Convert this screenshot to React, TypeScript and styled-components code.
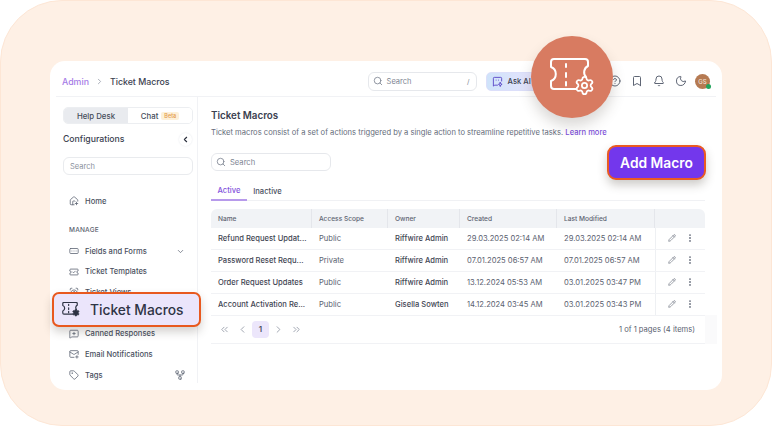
import React from "react";
import styled, { createGlobalStyle } from "styled-components";
import {
  Bell,
  Bookmark,
  ChevronDown,
  ChevronLeft,
  ChevronRight,
  ChevronsLeft,
  ChevronsRight,
  CircleHelp,
  EllipsisVertical,
  FormInput,
  HousePlus,
  MailPlus,
  MessageSquarePlus,
  Moon,
  Network,
  Pencil,
  ScanEye,
  Search,
  Settings,
  Tag,
  TicketCheck,
} from "lucide-react";

const GlobalStyle = createGlobalStyle`
  html, body {
    margin: 0;
    background: #fff;
    font-family: Inter, "Liberation Sans", sans-serif;
    color: #3b4150;
  }
  * { box-sizing: border-box; }
`;

const Frame = styled.div`
  width: 772px;
  height: 426px;
  padding: 61px 50px 36px;
  background: #fef0e5;
  border: 1px solid #fde6d5;
  border-radius: 62px;
  overflow: hidden;
`;

const Card = styled.div`
  position: relative;
  display: flex;
  flex-direction: column;
  height: 329px;
  margin: -1px;
  background: #fff;
  border-radius: 15px;
`;

const TopBar = styled.header`
  display: flex;
  align-items: center;
  height: 36px;
  margin: 0 6px;
  padding: 5px 6px 0;
  border-bottom: 1px solid #f1f2f5;
  flex: none;
`;

const Crumb = styled.span`
  font-size: 8.8px;
  font-weight: 500;
  color: #a57be6;
`;

const CrumbCurrent = styled.span`
  font-size: 8.8px;
  font-weight: 500;
  color: #3b4150;
`;

const CrumbSep = styled.span`
  display: flex;
  margin: 0 6px 0 6px;
  color: #9298a5;
`;

const TopSearch = styled.div`
  display: flex;
  align-items: center;
  gap: 4px;
  width: 109px;
  height: 19px;
  margin-left: 198px;
  padding: 0 6px 0 4px;
  border: 1px solid #e6e8ec;
  border-radius: 6px;
  font-size: 7.5px;
  color: #7d8492;
`;

const Slash = styled.span`
  margin-left: auto;
  font-size: 7px;
`;

const AskAi = styled.div`
  display: flex;
  align-items: center;
  gap: 5px;
  width: 62px;
  height: 19px;
  margin-left: 9px;
  padding-left: 5px;
  border-radius: 5px;
  border: 1px solid #dcdffa;
  background: linear-gradient(90deg, #cfe3fa, #ece4fd);
  font-size: 7.6px;
  font-weight: 500;
  color: #3b4150;
`;

const TopIcons = styled.div`
  display: flex;
  align-items: center;
  margin-left: auto;
  gap: 10px;
  color: #5f6675;
`;

const Avatar = styled.div`
  position: relative;
  display: flex;
  align-items: center;
  justify-content: center;
  width: 15px;
  height: 15px;
  margin-left: -2px;
  border-radius: 50%;
  background: #b57a52;
  color: #f3e2d6;
  font-size: 6px;
  font-weight: 500;
`;

const OnlineDot = styled.span`
  position: absolute;
  right: -1px;
  bottom: 0;
  width: 5px;
  height: 5px;
  border-radius: 50%;
  background: #22a45d;
`;

const Body = styled.div`
  display: flex;
  flex: 1;
  min-height: 0;
`;

const Sidebar = styled.aside`
  width: 148px;
  height: 286px;
  padding: 10px 4px 0 13px;
  border-right: 1px solid #f1f2f5;
  flex: none;
`;

const Tabs = styled.div`
  display: flex;
  width: 130px;
  height: 17px;
  border: 1px solid #eceef1;
  border-radius: 5px;
  overflow: hidden;
  font-size: 7.8px;
  font-weight: 500;
`;

const TabButton = styled.div<{ $active?: boolean }>`
  display: flex;
  align-items: center;
  justify-content: center;
  gap: 3px;
  width: 65px;
  background: ${({ $active }) => ($active ? "#e9ebef" : "#fff")};
  color: #454b59;
`;

const BetaBadge = styled.span`
  padding: 1px 3px;
  border-radius: 2px;
  background: #fdf0d8;
  color: #e39a4a;
  font-size: 5.5px;
`;

const ConfigRow = styled.div`
  display: flex;
  align-items: center;
  justify-content: space-between;
  height: 16px;
  margin-top: 7px;
  font-size: 8.7px;
  font-weight: 500;
  color: #3b4150;
`;

const CollapseButton = styled.span`
  display: flex;
  align-items: center;
  justify-content: center;
  width: 13px;
  height: 13px;
  margin-right: 1px;
  border-radius: 50%;
  box-shadow: 0 0 2px #e3e5ea;
  color: #2e3340;
`;

const SideSearch = styled.div`
  display: flex;
  align-items: center;
  width: 130px;
  height: 18px;
  margin-top: 10px;
  padding-left: 6px;
  border: 1px solid #e9ebee;
  border-radius: 6px;
  font-size: 7.5px;
  color: #8a909c;
`;

const NavRow = styled.div<{ $gapTop?: number }>`
  display: flex;
  align-items: center;
  gap: 6px;
  height: 20.7px;
  margin-top: ${({ $gapTop }) => $gapTop ?? 0}px;
  padding-left: 6px;
  font-size: 7.6px;
  font-weight: 500;
  color: #4a505e;
  svg { flex: none; color: #646b79; }
`;

const NavTrail = styled.span<{ $flip?: boolean }>`
  display: flex;
  margin-left: auto;
  margin-right: 8px;
  transform: ${({ $flip }) => ($flip ? "rotate(180deg)" : "none")};
`;

const NavSection = styled.div`
  margin: 14px 0 7px 6px;
  font-size: 6.5px;
  font-weight: 500;
  letter-spacing: 0.2px;
  color: #5c6270;
`;

const Main = styled.main`
  flex: 1;
  min-width: 0;
  padding: 12px 17px 0 13px;
`;

const Title = styled.h1`
  margin: 0;
  font-size: 9.8px;
  line-height: 14px;
  font-weight: 600;
  color: #3b4150;
`;

const Description = styled.p`
  margin: 4px 0 0;
  font-size: 7.6px;
  line-height: 12px;
  color: #656c7a;
`;

const LearnMore = styled.span`
  font-weight: 500;
  color: #7c4fd8;
`;

const MainSearch = styled.div`
  display: flex;
  align-items: center;
  gap: 4px;
  width: 120px;
  height: 18px;
  margin-top: 14px;
  padding-left: 4px;
  border: 1px solid #e6e8ec;
  border-radius: 6px;
  font-size: 7.6px;
  color: #7d8492;
`;

const ViewTabs = styled.div`
  display: flex;
  height: 20px;
  margin-top: 10px;
  border-bottom: 1px solid #f0f1f4;
  font-size: 7.6px;
  font-weight: 500;
`;

const ViewTab = styled.div<{ $active?: boolean }>`
  display: flex;
  align-items: center;
  justify-content: center;
  width: ${({ $active }) => ($active ? "36px" : "41px")};
  height: 20px;
  color: ${({ $active }) => ($active ? "#8454dc" : "#4a505e")};
  border-bottom: ${({ $active }) => ($active ? "2px solid #b79aeb" : "none")};
`;

const TableWrap = styled.div`
  width: 494px;
  margin-top: 8px;
  border-radius: 6px 6px 0 0;
`;

const COLUMNS = "101px 76px 72px 97px 98px 50px";

const HeadRow = styled.div`
  display: grid;
  grid-template-columns: ${COLUMNS};
  height: 19px;
  background: #f1f3f6;
  border-radius: 6px 6px 0 0;
`;

const HeadCell = styled.div`
  display: flex;
  align-items: center;
  padding-left: 7px;
  border-right: 1px solid #e4e6eb;
  font-size: 6.6px;
  font-weight: 500;
  color: #5e6472;
  &:last-child { border-right: none; }
`;

const DataRow = styled.div`
  display: grid;
  grid-template-columns: ${COLUMNS};
  height: 21.9px;
  border-bottom: 1px solid #f1f2f5;
`;

const Cell = styled.div<{ $tone?: "strong" | "muted" }>`
  display: flex;
  align-items: center;
  padding-left: 7px;
  white-space: nowrap;
  overflow: hidden;
  font-size: 7.6px;
  font-weight: ${({ $tone }) => ($tone === "strong" ? 500 : 400)};
  color: ${({ $tone }) => ($tone === "strong" ? "#3f4553" : "#5b6270")};
`;

const ActionCell = styled.div`
  display: flex;
  align-items: center;
  gap: 9px;
  padding-left: 12px;
  border-left: 1px solid #eef0f3;
  color: #6c7280;
`;

const Pager = styled.div`
  display: flex;
  align-items: center;
  width: 494px;
  height: 28px;
  padding: 0 10px 0 5px;
  border-bottom: 1px solid #f1f2f5;
  color: #9aa0ac;
`;

const PageButton = styled.span<{ $current?: boolean }>`
  display: flex;
  align-items: center;
  justify-content: center;
  width: 17px;
  height: 17px;
  margin-right: 1px;
  border-radius: 4px;
  background: ${({ $current }) => ($current ? "#ece6fb" : "transparent")};
  color: ${({ $current }) => ($current ? "#4a505e" : "#9aa0ac")};
  font-size: 8px;
  font-weight: 600;
`;

const PageSummary = styled.span`
  margin-left: auto;
  font-size: 7.6px;
  color: #5b6270;
`;

const HighlightRow = styled.div`
  position: absolute;
  left: 2px;
  top: 231px;
  display: flex;
  align-items: center;
  gap: 10px;
  width: 149px;
  height: 35px;
  padding-left: 8px;
  background: #ebe5fb;
  border: 2px solid #e8591f;
  border-radius: 7px;
  box-shadow: 0 5px 10px rgba(60, 50, 40, 0.22);
  font-size: 13.8px;
  font-weight: 500;
  color: #2f3445;
`;

const AddMacroButton = styled.div`
  position: absolute;
  left: 557px;
  top: 84px;
  display: flex;
  align-items: center;
  justify-content: center;
  width: 99px;
  height: 35px;
  background: #7337ec;
  border: 2px solid #ea5a22;
  border-radius: 9px;
  box-shadow: 0 5px 10px rgba(60, 50, 40, 0.25);
  font-size: 13.8px;
  font-weight: 600;
  color: #fff;
`;

const Bubble = styled.div`
  position: absolute;
  left: 481px;
  top: -25px;
  display: flex;
  align-items: center;
  justify-content: center;
  width: 82px;
  height: 82px;
  border-radius: 50%;
  background: #d87b61;
  box-shadow: 0 8px 14px rgba(70, 60, 50, 0.2);
`;

const ScrollGutter = styled.div`
  position: absolute;
  left: 655px;
  top: 254px;
  width: 12px;
  height: 29px;
  background: #fafafb;
`;

const MacroGlyph: React.FC<{ size: number; color: string; gearFill: string; weight: number }> = ({
  size,
  color,
  gearFill,
  weight,
}) => (
  <svg width={size} height={(size * 38) / 46} viewBox="0 0 46 38" fill="none" stroke={color} strokeWidth={weight} strokeLinecap="round" strokeLinejoin="round">
    <path d="M27 31H5a3 3 0 0 1-3-3v-5a7.500 7.500 0 0 0 0-14V4a3 3 0 0 1 3-3h31a3 3 0 0 1 3 3v4a7 7 0 0 0-2 11" />
    <path d="M17 6v3M17 15v4M17 24v3.500" />
    <Settings x={25} y={17} width={21} height={21} color={color} fill={gearFill} strokeWidth={2} />
  </svg>
);

const AskAiGlyph = () => (
  <svg width="11" height="11" viewBox="0 0 24 24" fill="none" stroke="#5a46c8" strokeWidth="2" strokeLinecap="round" strokeLinejoin="round">
    <path d="M12 20H6l-3 2V5a2 2 0 0 1 2-2h14a2 2 0 0 1 2 2v6" />
    <path d="M18 14l1.200 3 2.800 1.200-2.800 1.200L18 23l-1.200-3.600L14 18.200l2.800-1.200z" />
    <path d="M9 9h.01M14 9h.01" />
  </svg>
);

const rows = [
  { name: "Refund Request Updat...", scope: "Public", owner: "Riffwire Admin", created: "29.03.2025 02:14 AM", modified: "29.03.2025 02:14 AM" },
  { name: "Password Reset Requ...", scope: "Private", owner: "Riffwire Admin", created: "07.01.2025 06:57 AM", modified: "07.01.2025 06:57 AM" },
  { name: "Order Request Updates", scope: "Public", owner: "Riffwire Admin", created: "13.12.2024 05:53 AM", modified: "03.01.2025 03:47 PM" },
  { name: "Account Activation Re...", scope: "Public", owner: "Gisella Sowten", created: "14.12.2024 03:45 AM", modified: "03.01.2025 03:43 PM" },
];

const headers = ["Name", "Access Scope", "Owner", "Created", "Last Modified", ""];

export default function App() {
  return (
    <>
      <GlobalStyle />
      <Frame>
        <Card>
          <TopBar>
            <Crumb>Admin</Crumb>
            <CrumbSep><ChevronRight size={9} /></CrumbSep>
            <CrumbCurrent>Ticket Macros</CrumbCurrent>
            <TopSearch>
              <Search size={10} />
              Search
              <Slash>/</Slash>
            </TopSearch>
            <AskAi>
              <AskAiGlyph />
              Ask AI
            </AskAi>
            <TopIcons>
              <CircleHelp size={12} />
              <Bookmark size={12} />
              <Bell size={12} />
              <Moon size={12} />
              <Avatar>
                GS
                <OnlineDot />
              </Avatar>
            </TopIcons>
          </TopBar>
          <Body>
            <Sidebar>
              <Tabs>
                <TabButton $active>Help Desk</TabButton>
                <TabButton>
                  Chat <BetaBadge>Beta</BetaBadge>
                </TabButton>
              </Tabs>
              <ConfigRow>
                Configurations
                <CollapseButton><ChevronLeft size={9} strokeWidth={3} /></CollapseButton>
              </ConfigRow>
              <SideSearch>Search</SideSearch>
              <NavRow $gapTop={16}><HousePlus size={10} />Home</NavRow>
              <NavSection>MANAGE</NavSection>
              <NavRow>
                <FormInput size={10} />
                Fields and Forms
                <NavTrail><ChevronDown size={9} /></NavTrail>
              </NavRow>
              <NavRow><TicketCheck size={10} />Ticket Templates</NavRow>
              <NavRow><ScanEye size={10} />Ticket Views</NavRow>
              <NavRow />
              <NavRow><MessageSquarePlus size={10} />Canned Responses</NavRow>
              <NavRow><MailPlus size={10} />Email Notifications</NavRow>
              <NavRow>
                <Tag size={10} />
                Tags
                <NavTrail $flip><Network size={10} /></NavTrail>
              </NavRow>
            </Sidebar>
            <Main>
              <Title>Ticket Macros</Title>
              <Description>
                Ticket macros consist of a set of actions triggered by a single action to streamline repetitive tasks.{" "}
                <LearnMore>Learn more</LearnMore>
              </Description>
              <MainSearch>
                <Search size={10} />
                Search
              </MainSearch>
              <ViewTabs>
                <ViewTab $active>Active</ViewTab>
                <ViewTab>Inactive</ViewTab>
              </ViewTabs>
              <TableWrap>
                <HeadRow>
                  {headers.map((h) => (
                    <HeadCell key={h || "actions"}>{h}</HeadCell>
                  ))}
                </HeadRow>
                {rows.map((r) => (
                  <DataRow key={r.name}>
                    <Cell $tone="strong">{r.name}</Cell>
                    <Cell>{r.scope}</Cell>
                    <Cell $tone="strong">{r.owner}</Cell>
                    <Cell>{r.created}</Cell>
                    <Cell>{r.modified}</Cell>
                    <ActionCell>
                      <Pencil size={8} />
                      <EllipsisVertical size={10} strokeWidth={2.5} />
                    </ActionCell>
                  </DataRow>
                ))}
              </TableWrap>
              <Pager>
                <PageButton><ChevronsLeft size={11} /></PageButton>
                <PageButton><ChevronLeft size={11} /></PageButton>
                <PageButton $current>1</PageButton>
                <PageButton><ChevronRight size={11} /></PageButton>
                <PageButton><ChevronsRight size={11} /></PageButton>
                <PageSummary>1 of 1 pages (4 items)</PageSummary>
              </Pager>
            </Main>
          </Body>
          <ScrollGutter />
          <HighlightRow>
            <MacroGlyph size={18} color="#2f3445" gearFill="#2f3445" weight={3} />
            Ticket Macros
          </HighlightRow>
          <AddMacroButton>Add Macro</AddMacroButton>
          <Bubble>
            <MacroGlyph size={46} color="#fff" gearFill="#d87b61" weight={2} />
          </Bubble>
        </Card>
      </Frame>
    </>
  );
}
